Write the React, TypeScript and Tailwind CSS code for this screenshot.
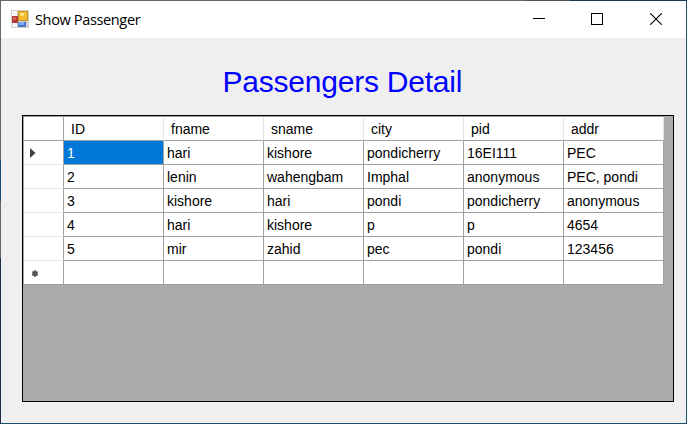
const columns = ['ID', 'fname', 'sname', 'city', 'pid', 'addr'];

const rows = [
  ['1', 'hari', 'kishore', 'pondicherry', '16EI111', 'PEC'],
  ['2', 'lenin', 'wahengbam', 'Imphal', 'anonymous', 'PEC, pondi'],
  ['3', 'kishore', 'hari', 'pondi', 'pondicherry', 'anonymous'],
  ['4', 'hari', 'kishore', 'p', 'p', '4654'],
  ['5', 'mir', 'zahid', 'pec', 'pondi', '123456'],
  ['', '', '', '', '', ''],
];

function FormIcon() {
  return (
    <svg className="mb-px" width="18" height="18" viewBox="0 0 18 18" shapeRendering="crispEdges">
      <rect width="18" height="18" fill="#d2d2d2" />
      <rect x="1" y="1" width="5" height="5" fill="#f6f6f6" />
      <rect x="1" y="13" width="5" height="4" fill="#f3f3f3" />
      <rect x="1" y="6" width="6" height="7" fill="#b23a35" />
      <rect x="2" y="7" width="3" height="3" fill="#d5625a" />
      <rect x="7" y="1" width="10" height="10" fill="#c6921c" />
      <rect x="8" y="2" width="8" height="8" fill="#f3bd32" />
      <rect x="9" y="3" width="4" height="3" fill="#ffdf78" />
      <rect x="7" y="12" width="8" height="5" fill="#4778cf" />
      <rect x="8" y="12" width="5" height="3" fill="#7fb0f5" />
    </svg>
  );
}

function TitleBar() {
  return (
    <div className="flex h-[37px] items-center bg-white pl-[10px]">
      <FormIcon />
      <span className="ml-[6px] flex-1 font-['Open_Sans',sans-serif] text-[14.5px] leading-5 tracking-[-0.35px] text-black">
        Show Passenger
      </span>
      <div className="mb-px flex items-center gap-[46px] pr-[24px]">
        <svg className="-ml-px mr-px" width="12" height="12" shapeRendering="crispEdges">
          <path d="M0 5.5H12" stroke="#000" />
        </svg>
        <svg className="-ml-px mr-px" width="12" height="12" shapeRendering="crispEdges">
          <rect x=".5" y=".5" width="11" height="11" fill="none" stroke="#000" />
        </svg>
        <svg width="12" height="12">
          <path d="M.2 .2L11.8 11.8M11.8 .2L.2 11.8" stroke="#000" strokeWidth="1.1" />
        </svg>
      </div>
    </div>
  );
}

function RowMarker({ index }: { index: number }) {
  if (index === 0) {
    return (
      <svg width="6" height="10">
        <path d="M0 0L5.5 5L0 10Z" fill="#404040" />
      </svg>
    );
  }
  if (index === rows.length - 1) {
    return (
      <svg className="ml-[2px] mt-[2px]" width="6" height="7" viewBox="0 0 6 7">
        <path d="M3 0V7M0 1.7L6 5.3M6 1.7L0 5.3" stroke="#505050" strokeWidth="1.3" />
        <circle cx="3" cy="3.5" r="2.6" fill="#555" />
      </svg>
    );
  }
  return null;
}

function DataGrid() {
  return (
    <div className="h-[287px] w-[652px] border border-black bg-[#ababab]">
      <div className="flex w-[641px] flex-col border-l border-t border-[#a0a0a0]">
        <div className="flex h-6 bg-white">
          <div className="w-10 border-b border-r border-[#a0a0a0]" />
          {columns.map((name) => (
            <div
              key={name}
              className="flex w-[100px] items-center border-b border-r border-b-[#a0a0a0] border-r-[#e5e5e5] pl-[7px]"
            >
              {name}
            </div>
          ))}
        </div>
        {rows.map((row, r) => (
          <div key={r} className="flex h-6 bg-white">
            <div
              className={`flex w-10 items-center border-b border-r border-r-[#a0a0a0] pl-[6px] ${
                r === rows.length - 1 ? 'border-b-[#a0a0a0]' : 'border-b-[#e5e5e5]'
              }`}
            >
              <RowMarker index={r} />
            </div>
            {row.map((value, c) => (
              <div
                key={c}
                className={`flex w-[100px] items-center whitespace-pre border-b border-r border-[#a0a0a0] pl-[3px] ${
                  r === 0 && c === 0 ? 'bg-[#0078d7] text-white' : ''
                }`}
              >
                {value}
              </div>
            ))}
          </div>
        ))}
      </div>
    </div>
  );
}

export default function App() {
  return (
    <div className="flex h-[424px] w-[687px] flex-col bg-[linear-gradient(90deg,#696567_0_526px,#555053_526px_570px,#173955_570px)] pt-px">
      <div className="flex flex-1 bg-[linear-gradient(180deg,#666_0_159px,#144a78_159px_200px,#666_200px_257px,#1b2e43_257px)] pl-px">
        <div className="flex flex-1 bg-[#185070] pb-px pr-px">
          <div className="flex flex-1 flex-col bg-[#efefef]">
            <TitleBar />
            <div className="flex flex-col pl-[21px] pt-[24px] font-['Liberation_Sans',Arial,sans-serif] text-[14px] leading-5 text-black">
              <h1 className="mb-[13px] h-10 pl-[200.5px] text-[30px] leading-10 tracking-[-0.22px] text-[#0000ff]">
                Passengers Detail
              </h1>
              <DataGrid />
            </div>
          </div>
        </div>
      </div>
    </div>
  );
}
